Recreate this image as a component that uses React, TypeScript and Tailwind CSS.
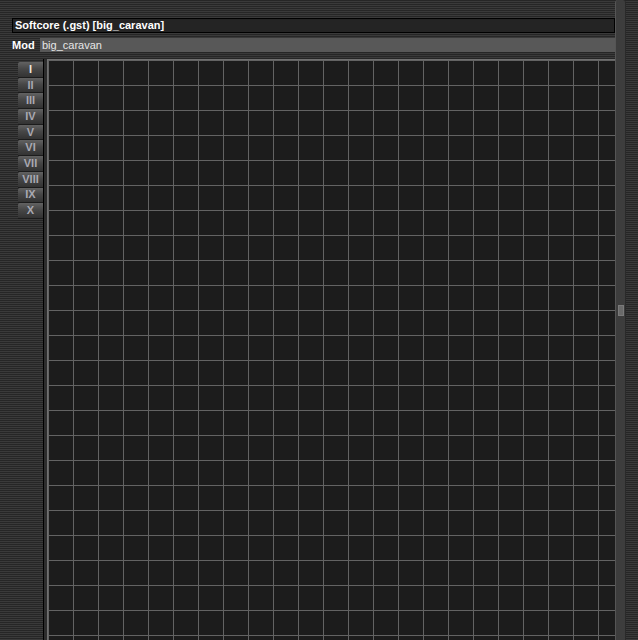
import React from "react"

const tabs = ["I", "II", "III", "IV", "V", "VI", "VII", "VIII", "IX", "X"]

const stripes =
  "bg-[repeating-linear-gradient(to_bottom,#262626_0px,#262626_1px,#3a3a3a_1px,#3a3a3a_2px)]"

export default function App() {
  return (
    <div
      className={`flex w-[638px] h-[640px] overflow-hidden ${stripes}`}
      style={{ fontFamily: "'Liberation Sans', Arial, sans-serif" }}
    >
      {/* Main column */}
      <div className="flex flex-col flex-1 min-w-0 pt-[18px] pl-[12px]">
        {/* Title bar */}
        <div className="h-[15px] border border-black bg-[#242424] flex items-center pl-[2px] text-[11px] font-bold text-white leading-none">
          Softcore (.gst) [big_caravan]
        </div>

        {/* Mod row */}
        <div className="mt-[5px] flex items-center h-[14px]">
          <span className="w-[28px] text-[11px] font-bold text-white leading-none">Mod</span>
          <div className="flex-1 h-full bg-[#585858] flex items-center pl-[2px] text-[11px] text-[#e6e6e6] leading-none">
            big_caravan
          </div>
        </div>

        {/* Body */}
        <div className="flex flex-1 mt-[7px] min-h-0">
          {/* Tabs */}
          <div className="w-[31px] pl-[6px] pt-[3px] flex flex-col">
            {tabs.map((t, i) => (
              <div
                key={t}
                className={`h-[15.7px] w-[25px] flex items-center justify-center border-b border-[#1c1c1c] rounded-tl-[2px] bg-[linear-gradient(to_bottom,#626262,#474747_45%,#333333)] text-[11px] font-bold leading-none ${
                  i === 0 ? "text-[#ece6dc]" : "text-[#a9a9b2]"
                }`}
              >
                {t}
              </div>
            ))}
          </div>

          {/* Separator strip */}
          <div className="w-[4px] bg-[#2c2c2c] border-l border-black" />

          {/* Grid */}
          <div className="flex-1 border-l border-t border-[#707070] bg-[#1c1c1c] bg-[linear-gradient(to_right,transparent_24px,#636363_24px),linear-gradient(to_bottom,transparent_24px,#636363_24px)] bg-[size:25px_25px] bg-[position:1px_1px]" />
        </div>
      </div>

      {/* Scrollbar */}
      <div className="w-[11px] relative bg-[#3d3d3d] border-l border-[#555] border-r border-r-[#2a2a2a] rounded-t-[3px]">
        <div className="absolute left-[2px] top-[305px] w-[6px] h-[11px] bg-[#6a6a6a] border border-[#7a7a7a]" />
      </div>

      {/* Right edge */}
      <div className="w-[12px]" />
    </div>
  )
}
